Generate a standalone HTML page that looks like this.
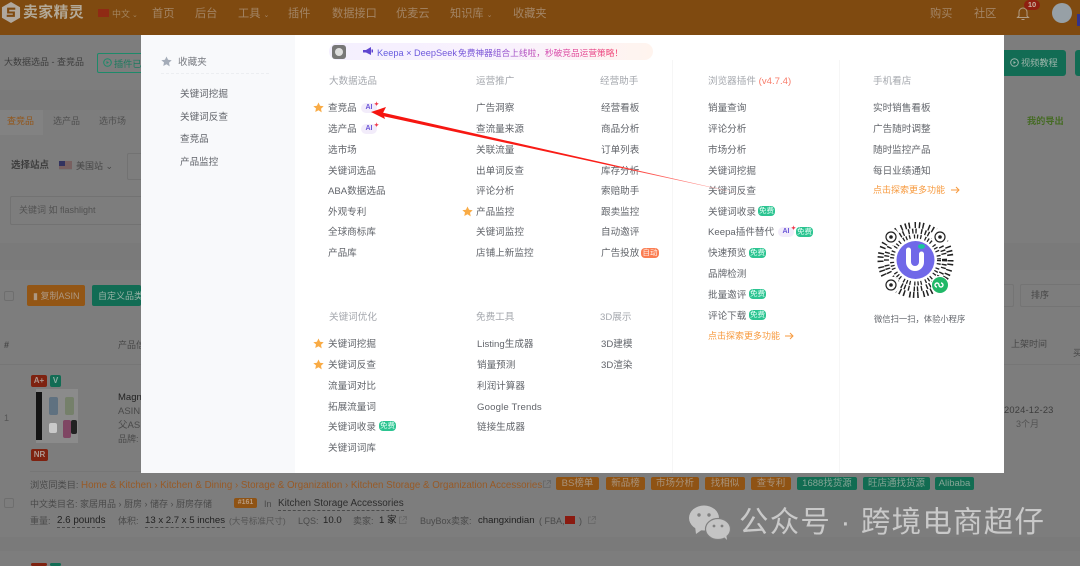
<!DOCTYPE html>
<html lang="zh"><head><meta charset="utf-8"><title>卖家精灵</title>
<style>
html,body{margin:0;padding:0}
body{width:1080px;height:566px;overflow:hidden;position:relative;background:#7d7d7d;font-family:"Liberation Sans","Noto Sans CJK SC",sans-serif;color:#5f6268}
#p{position:absolute;left:0;top:0;width:1080px;height:566px;overflow:hidden;filter:blur(.35px)}
#m{position:absolute;left:0;top:0;width:1080px;height:566px}
.t{position:absolute;white-space:nowrap;font-size:9.6px;line-height:14px;height:14px;color:#62656b;margin-top:1px}
#m .t{margin-top:4px}
#m .t.o{margin-top:2px}
.n{top:5px;height:16px;line-height:16px;font-size:11.2px;color:#a38566}
.h{color:#a5a8ae}
.d{color:#3d3d3d}
.g{color:#474747}
.b{position:absolute;border-radius:2px}
.tag{position:absolute;height:13px;line-height:13px;border-radius:2px;font-size:9.5px;text-align:center;color:#a8937c;background:#8f5314;top:477px}
.tg{background:#126c52;color:#86a596}
.free{position:absolute;width:17px;height:10px;line-height:10px;border-radius:4px;background:#2cc491;color:#e6fff6;font-size:7.5px;text-align:center}
.ai{position:absolute;width:16px;height:10px;line-height:10px;border-radius:5px;background:#f2ecfa;color:#6a55d8;font-size:7px;font-weight:bold;text-align:center}
.ai i{position:absolute;left:13px;top:-2px;color:#f03a4c;font-style:normal;font-size:6px;line-height:8px}
.s{position:absolute;width:11px;height:11px}
.o{color:#f79a3e;font-size:9px}
.u{border-bottom:1px dashed #4b4b4b;height:13px;color:#222;font-size:9.6px}
.q{color:#4a4a4a;font-size:9px}
</style></head><body><div id="p">

<!-- header -->
<div class="b" style="left:0;top:0;width:1080px;height:35px;background:#7f4a10;border-radius:0"></div>
<svg style="position:absolute;left:1px;top:1px" width="20" height="23" viewBox="0 0 21 23"><path d="M10.5 .5 20 6v11l-9.500 5.500L1 17V6z" fill="#b0a89e"/><path d="M15 7.500H7.500v4h6v3.500H6" fill="none" stroke="#7f4a10" stroke-width="2.200"/></svg>
<div class="t" style="left:23px;top:2px;height:20px;line-height:20px;font-size:14.800px;font-weight:bold;color:#b3a998;letter-spacing:.5px">卖家精灵</div>
<div class="b" style="left:98px;top:9px;width:11px;height:8px;background:#8f2a14;border-radius:0"></div>
<div class="t" style="left:112px;top:6px;color:#a3855f;font-size:9px">中文<span style="font-size:7px"> ⌄</span></div>
<div class="t n" style="left:152px">首页</div>
<div class="t n" style="left:195px">后台</div>
<div class="t n" style="left:238px">工具 <span style="font-size:7px">⌄</span></div>
<div class="t n" style="left:288px">插件</div>
<div class="t n" style="left:332px">数据接口</div>
<div class="t n" style="left:396px">优麦云</div>
<div class="t n" style="left:450px">知识库 <span style="font-size:7px">⌄</span></div>
<div class="t n" style="left:513px">收藏夹</div>
<div class="t n" style="left:930px">购买</div>
<div class="t n" style="left:974px">社区</div>
<svg style="position:absolute;left:1016px;top:5px" width="14" height="16" viewBox="0 0 14 16"><path d="M3 11V7a4 4 0 0 1 8 0v4l1.500 1.500h-11zM5.500 14.500h3" fill="none" stroke="#b09c84" stroke-width="1"/></svg>
<div class="b" style="left:1024px;top:0;width:16px;height:10px;border-radius:5px;background:#8f1f10;color:#c9b5a5;font-size:7.500px;line-height:10px;text-align:center;font-weight:bold">10</div>
<div class="b" style="left:1052px;top:3px;width:20px;height:20px;border-radius:50%;background:#97a0a6"></div>
<div class="b" style="left:1077px;top:14px;width:3px;height:12px;background:#33338a;border-radius:0"></div>

<!-- left background -->
<div class="t d" style="left:4px;top:54px;font-size:9px">大数据选品 - 查竞品</div>
<div class="b" style="left:97px;top:53px;width:50px;height:20px;border:1px solid #1d8a6a;box-sizing:border-box"></div>
<svg style="position:absolute;left:103px;top:58px" width="9" height="9" viewBox="0 0 9 9"><circle cx="4.500" cy="4.500" r="3.800" fill="none" stroke="#1d8a6a"/><path d="M3.500 3v3l2.500-1.500z" fill="#1d8a6a"/></svg>
<div class="t" style="left:114px;top:56px;color:#1d7a5f;font-size:9.200px">插件已</div>
<div class="b" style="left:0;top:90px;width:141px;height:20px;background:#7a7a7a;border-radius:0"></div>
<div class="b" style="left:0;top:110px;width:43px;height:25px;background:#828282;border-radius:0"></div>
<div class="t" style="left:7px;top:113px;color:#935518;font-size:9px">查竞品</div>
<div class="t" style="left:53px;top:113px;color:#4f4f4f;font-size:9px">选产品</div>
<div class="t" style="left:99px;top:113px;color:#4f4f4f;font-size:9px">选市场</div>
<div class="t d" style="left:11px;top:158px;font-size:9.500px;font-weight:bold">选择站点</div>
<svg style="position:absolute;left:59px;top:161px" width="13" height="9" viewBox="0 0 13 9"><rect width="13" height="9" fill="#767676"/><path d="M0 1h13M0 3h13M0 5h13M0 7h13" stroke="#7a4a4a" stroke-width="1"/><rect width="6" height="5" fill="#33335f"/></svg>
<div class="t g" style="left:76px;top:158px;font-size:9px">美国站 ⌄</div>
<div class="b" style="left:127px;top:153px;width:14px;height:25px;border:1px solid #727272"></div>
<div class="b" style="left:10px;top:196px;width:131px;height:27px;border:1px solid #727272"></div>
<div class="t" style="left:19px;top:202px;color:#525252;font-size:9px">关键词 如 flashlight</div>
<div class="b" style="left:0;top:243px;width:141px;height:27px;background:#7a7a7a;border-radius:0"></div>
<div class="b" style="left:1004px;top:243px;width:76px;height:27px;background:#7a7a7a;border-radius:0"></div>

<!-- right background -->
<div class="b" style="left:1004px;top:50px;width:62px;height:26px;background:#126c54;border-radius:0 3px 3px 0"></div>
<svg style="position:absolute;left:1010px;top:58px" width="9" height="9" viewBox="0 0 9 9"><circle cx="4.500" cy="4.500" r="3.800" fill="none" stroke="#9db5ab"/><path d="M3.500 3v3l2.500-1.500z" fill="#9db5ab"/></svg>
<div class="t" style="left:1021px;top:55px;color:#9db5ab;font-size:9.200px">视频教程</div>
<div class="b" style="left:1075px;top:50px;width:5px;height:26px;background:#126c54;border-radius:3px 0 0 3px"></div>
<div class="t" style="left:1027px;top:113px;color:#466b25;font-size:9.200px;font-weight:bold">我的导出</div>
<div class="b" style="left:1020px;top:284px;width:62px;height:21px;border:1px solid #747474"></div>
<div class="b" style="left:1000px;top:284px;width:12px;height:21px;border:1px solid #747474"></div>
<div class="t g" style="left:1031px;top:287px;font-size:9px">排序</div>
<div class="t g" style="left:1011px;top:336px;font-size:9px">上架时间</div>
<div class="t g" style="left:1073px;top:345px;font-size:9px">买</div>
<div class="t d" style="left:1004px;top:402px;font-size:9.300px;letter-spacing:.2px">2024-12-23</div>
<div class="t" style="left:1016px;top:416px;color:#535353;font-size:9px">3个月</div>

<!-- table left -->
<div class="b" style="left:4px;top:291px;width:8px;height:8px;border:1px solid #6e6e6e"></div>
<div class="b" style="left:27px;top:285px;width:58px;height:21px;background:#935615;border-radius:2px"></div>
<div class="t" style="left:33px;top:288px;color:#ad9882;font-size:9px">▮ 复制ASIN</div>
<div class="b" style="left:92px;top:285px;width:49px;height:21px;background:#126c54"></div>
<div class="t" style="left:98px;top:288px;color:#98b2a6;font-size:9px">自定义品类</div>
<div class="t g" style="left:4px;top:337px;font-weight:bold;font-size:9px">#</div>
<div class="t g" style="left:118px;top:337px;font-size:9px">产品信</div>
<div class="b" style="left:0;top:364px;width:141px;height:1px;background:#767676;border-radius:0"></div>
<div class="b" style="left:1004px;top:364px;width:76px;height:1px;background:#767676;border-radius:0"></div>
<div class="b" style="left:31px;top:375px;width:16px;height:12px;background:#7e2210;color:#ad9890;font-size:8px;line-height:12px;text-align:center;font-weight:bold">A+</div>
<div class="b" style="left:50px;top:375px;width:11px;height:12px;background:#126c54;color:#90b0a5;font-size:8px;line-height:12px;text-align:center;font-weight:bold">V</div>
<div class="b" style="left:36px;top:389px;width:42px;height:54px;background:#8b8b8b;border-radius:0"></div>
<div class="b" style="left:36px;top:392px;width:6px;height:48px;background:#141414;border-radius:0"></div>
<div class="b" style="left:49px;top:397px;width:9px;height:18px;background:#5f7180"></div>
<div class="b" style="left:65px;top:397px;width:9px;height:18px;background:#75806a"></div>
<div class="b" style="left:63px;top:420px;width:8px;height:18px;background:#7f4663"></div>
<div class="b" style="left:71px;top:420px;width:6px;height:14px;background:#222"></div>
<div class="b" style="left:49px;top:423px;width:8px;height:10px;background:#c9c9c9"></div>
<div class="b" style="left:31px;top:449px;width:17px;height:12px;background:#7e2210;color:#ad9890;font-size:8px;line-height:12px;text-align:center;font-weight:bold">NR</div>
<div class="t" style="left:4px;top:410px;color:#555;font-size:9px">1</div>
<div class="t" style="left:118px;top:390px;color:#222;font-size:9.500px">Magn</div>
<div class="t" style="left:118px;top:404px;color:#4a4a4a;font-size:9.500px">ASIN:</div>
<div class="t" style="left:118px;top:418px;color:#4a4a4a;font-size:9.500px">父ASI</div>
<div class="t" style="left:118px;top:431px;color:#4a4a4a;font-size:9px">品牌:</div>
<div class="b" style="left:30px;top:471px;width:111px;height:1px;background:#767676;border-radius:0"></div>

<!-- bottom rows -->
<div class="t" style="left:30px;top:477px;color:#4a4a4a;font-size:9.200px">浏览同类目: <span style="color:#985a26;font-size:9.750px">Home &amp; Kitchen › Kitchen &amp; Dining › Storage &amp; Organization › Kitchen Storage &amp; Organization Accessories</span></div>
<svg style="position:absolute;left:543px;top:480px" width="8" height="8" viewBox="0 0 8 8"><path d="M3 1H.5v6.500H7V5M4 .5h3.500V4M7.500 .5 3.500 4.500" fill="none" stroke="#666" stroke-width=".8"/></svg>
<div class="tag" style="left:556px;width:43px">BS榜单</div>
<div class="tag" style="left:606px;width:39px">新品榜</div>
<div class="tag" style="left:651px;width:48px">市场分析</div>
<div class="tag" style="left:705px;width:40px">找相似</div>
<div class="tag" style="left:751px;width:40px">查专利</div>
<div class="tag tg" style="left:797px;width:60px">1688找货源</div>
<div class="tag tg" style="left:863px;width:67px">旺店通找货源</div>
<div class="tag tg" style="left:935px;width:39px">Alibaba</div>
<div class="b" style="left:4px;top:498px;width:8px;height:8px;border:1px solid #6e6e6e"></div>
<div class="t q" style="left:30px;top:496px">中文类目名: 家居用品 › 厨房 › 储存 › 厨房存储</div>
<div class="b" style="left:234px;top:498px;width:23px;height:10px;background:#8f5314;color:#b89b7e;font-size:7px;line-height:10px;text-align:center;font-weight:bold">#161</div>
<div class="t q" style="left:264px;top:496px">In</div>
<div class="t u" style="left:278px;top:496px;color:#2d2d2d;font-size:9.900px">Kitchen Storage Accessories</div>
<div class="t q" style="left:30px;top:513px">重量:</div>
<div class="t u" style="left:57px;top:513px;font-size:9.800px">2.6 pounds</div>
<div class="t q" style="left:118px;top:513px">体积:</div>
<div class="t u" style="left:145px;top:513px">13 x 2.7 x 5 inches</div>
<div class="t" style="left:229px;top:513px;color:#555;font-size:8.500px">(大号标准尺寸)</div>
<div class="t q" style="left:298px;top:513px">LQS:</div>
<div class="t" style="left:323px;top:513px;color:#222;font-size:9.600px">10.0</div>
<div class="t q" style="left:353px;top:513px">卖家:</div>
<div class="t" style="left:379px;top:513px;color:#222;font-size:9.600px">1 家</div>
<svg style="position:absolute;left:399px;top:516px" width="8" height="8" viewBox="0 0 8 8"><path d="M3 1H.5v6.500H7V5M4 .5h3.500V4M7.500 .5 3.500 4.500" fill="none" stroke="#666" stroke-width=".8"/></svg>
<div class="t q" style="left:420px;top:513px">BuyBox卖家:</div>
<div class="t" style="left:478px;top:513px;color:#222;font-size:9.600px">changxindian</div>
<div class="t q" style="left:539px;top:513px">( FBA,</div>
<div class="b" style="left:565px;top:516px;width:10px;height:8px;background:#8a1a10;border-radius:0"></div>
<div class="t q" style="left:579px;top:513px">)</div>
<svg style="position:absolute;left:588px;top:516px" width="8" height="8" viewBox="0 0 8 8"><path d="M3 1H.5v6.500H7V5M4 .5h3.500V4M7.500 .5 3.500 4.500" fill="none" stroke="#666" stroke-width=".8"/></svg>
<div class="b" style="left:0;top:537px;width:1080px;height:14px;background:#7a7a7a;border-radius:0"></div>
<div class="b" style="left:31px;top:563px;width:16px;height:3px;background:#7e2210"></div>
<div class="b" style="left:50px;top:563px;width:11px;height:3px;background:#126c54"></div>

<!-- modal -->
<div class="b" style="left:141px;top:35px;width:863px;height:438px;background:#fff;border-radius:0"></div>
<div class="b" style="left:141px;top:35px;width:154px;height:438px;background:#f8f9fb;border-radius:0"></div>
<div class="b" style="left:672px;top:60px;width:1px;height:413px;background:#f6f6f6;border-radius:0"></div>
<div class="b" style="left:839px;top:60px;width:1px;height:413px;background:#f6f6f6;border-radius:0"></div>
<div class="b" style="left:161px;top:73px;width:108px;height:0;border-top:1px dashed #eceef1;border-radius:0"></div>

<div id="m">
<svg class="s" style="left:161px;top:56px" viewBox="0 0 24 24"><path d="M12 1l3.400 7.300 7.900 1-5.800 5.500 1.500 7.900L12 18l-7 3.700 1.500-7.900L.7 9.300l7.900-1z" fill="#a4acb8"/></svg>
<div class="t" style="left:178px;top:52px;color:#777a80">收藏夹</div>
<div class="t" style="left:180px;top:84px">关键词挖掘</div>
<div class="t" style="left:180px;top:107px">关键词反查</div>
<div class="t" style="left:180px;top:129px">查竞品</div>
<div class="t" style="left:180px;top:152px">产品监控</div>

<!-- banner -->
<div class="b" style="left:329px;top:43px;width:324px;height:17px;border-radius:9px;background:linear-gradient(90deg,#f4f0fe 0%,#f9f1fd 55%,#fff4ee 100%)"></div>
<div class="b" style="left:332px;top:45px;width:14px;height:14px;background:#777;border-radius:3px"></div>
<div class="b" style="left:335px;top:48px;width:8px;height:8px;background:#ddd;border-radius:50%"></div>
<svg style="position:absolute;left:363px;top:47px" width="10" height="9" viewBox="0 0 10 9"><path d="M0 3h3l5-3v8L3 5.500H0zM8.500 2.500h1.500v3H8.500z" fill="#5f46d0"/></svg>
<div class="t" style="left:377px;top:42px;font-size:8.700px;background:linear-gradient(90deg,#5f57e0 0%,#7a52d6 45%,#d64bb0 70%,#f5456f 100%);-webkit-background-clip:text;background-clip:text;color:transparent"><span style="display:inline-block;width:81px;font-size:9.200px">Keepa × DeepSeek</span>免费神器组合上线啦，秒破竞品运营策略！</div>

<!-- heads -->
<div class="t h" style="left:329px;top:71px">大数据选品</div>
<div class="t h" style="left:476px;top:71px">运营推广</div>
<div class="t h" style="left:600px;top:71px">经营助手</div>
<div class="t h" style="left:708px;top:71px">浏览器插件 <span style="color:#f87c6a">(v4.7.4)</span></div>
<div class="t h" style="left:873px;top:71px">手机看店</div>

<!-- col 1 -->
<svg class="s" style="left:313px;top:102px" viewBox="0 0 24 24"><path d="M12 1l3.400 7.300 7.900 1-5.800 5.500 1.500 7.900L12 18l-7 3.700 1.500-7.900L.7 9.300l7.900-1z" fill="#f9ab45"/></svg>
<div class="t" style="left:328px;top:98px">查竞品</div><div class="ai" style="left:361px;top:103px">AI<i>✦</i></div>
<div class="t" style="left:328px;top:119px">选产品</div><div class="ai" style="left:361px;top:124px">AI<i>✦</i></div>
<div class="t" style="left:328px;top:140px">选市场</div>
<div class="t" style="left:328px;top:161px">关键词选品</div>
<div class="t" style="left:328px;top:181px">ABA数据选品</div>
<div class="t" style="left:328px;top:202px">外观专利</div>
<div class="t" style="left:328px;top:222px">全球商标库</div>
<div class="t" style="left:328px;top:243px">产品库</div>

<!-- col 2 -->
<div class="t" style="left:476px;top:98px">广告洞察</div>
<div class="t" style="left:476px;top:119px">查流量来源</div>
<div class="t" style="left:476px;top:140px">关联流量</div>
<div class="t" style="left:476px;top:161px">出单词反查</div>
<div class="t" style="left:476px;top:181px">评论分析</div>
<svg class="s" style="left:462px;top:206px" viewBox="0 0 24 24"><path d="M12 1l3.400 7.300 7.900 1-5.800 5.500 1.500 7.900L12 18l-7 3.700 1.500-7.900L.7 9.300l7.900-1z" fill="#f9ab45"/></svg>
<div class="t" style="left:476px;top:202px">产品监控</div>
<div class="t" style="left:476px;top:222px">关键词监控</div>
<div class="t" style="left:476px;top:243px">店铺上新监控</div>

<!-- col 3 -->
<div class="t" style="left:601px;top:98px">经营看板</div>
<div class="t" style="left:601px;top:119px">商品分析</div>
<div class="t" style="left:601px;top:140px">订单列表</div>
<div class="t" style="left:601px;top:161px">库存分析</div>
<div class="t" style="left:601px;top:181px">索赔助手</div>
<div class="t" style="left:601px;top:202px">跟卖监控</div>
<div class="t" style="left:601px;top:222px">自动邀评</div>
<div class="t" style="left:601px;top:243px">广告投放</div>
<div class="free" style="left:641px;top:248px;background:#fb7d52;color:#fff0e8;width:18px">自动</div>

<!-- col 4 -->
<div class="t" style="left:708px;top:98px">销量查询</div>
<div class="t" style="left:708px;top:119px">评论分析</div>
<div class="t" style="left:708px;top:140px">市场分析</div>
<div class="t" style="left:708px;top:161px">关键词挖掘</div>
<div class="t" style="left:708px;top:181px">关键词反查</div>
<div class="t" style="left:708px;top:202px">关键词收录</div><div class="free" style="left:758px;top:206px">免费</div>
<div class="t" style="left:708px;top:222px">Keepa插件替代</div><div class="ai" style="left:778px;top:227px">AI<i>✦</i></div><div class="free" style="left:796px;top:227px">免费</div>
<div class="t" style="left:708px;top:243px">快速预览</div><div class="free" style="left:749px;top:248px">免费</div>
<div class="t" style="left:708px;top:264px">品牌检测</div>
<div class="t" style="left:708px;top:285px">批量邀评</div><div class="free" style="left:749px;top:289px">免费</div>
<div class="t" style="left:708px;top:306px">评论下载</div><div class="free" style="left:749px;top:310px">免费</div>
<div class="t o" style="left:708px;top:327px">点击探索更多功能</div>
<svg style="position:absolute;left:785px;top:332px" width="9" height="8" viewBox="0 0 9 8"><path d="M0 4h8M5 1l3 3-3 3" fill="none" stroke="#f79a3e"/></svg>

<!-- col 5 -->
<div class="t" style="left:873px;top:98px">实时销售看板</div>
<div class="t" style="left:873px;top:119px">广告随时调整</div>
<div class="t" style="left:873px;top:140px">随时监控产品</div>
<div class="t" style="left:873px;top:161px">每日业绩通知</div>
<div class="t o" style="left:873px;top:181px">点击探索更多功能</div>
<svg style="position:absolute;left:951px;top:186px" width="9" height="8" viewBox="0 0 9 8"><path d="M0 4h8M5 1l3 3-3 3" fill="none" stroke="#f79a3e"/></svg>

<!-- QR -->
<svg style="position:absolute;left:874px;top:219px" width="82" height="82" viewBox="0 0 82 82">
<g fill="none" stroke="#222">
<circle cx="41.500" cy="41" r="23.500" stroke-width="4" stroke-dasharray="1.300 2 1.300 3.500 1.300 1.800"/>
<circle cx="41.500" cy="41" r="29" stroke-width="5" stroke-dasharray="1.400 2.600 1.400 1.900 1.400 4.200"/>
<circle cx="41.500" cy="41" r="35" stroke-width="6" stroke-dasharray="1.500 2.200 1.500 4.500 1.500 2.800"/>
</g>
<circle cx="17" cy="18" r="8.500" fill="#fff"/><circle cx="66" cy="18" r="8.500" fill="#fff"/><circle cx="17" cy="66" r="8.500" fill="#fff"/>
<circle cx="17" cy="18" r="5" fill="none" stroke="#222" stroke-width="1.200"/><circle cx="17" cy="18" r="1.800" fill="#222"/>
<circle cx="66" cy="18" r="5" fill="none" stroke="#222" stroke-width="1.200"/><circle cx="66" cy="18" r="1.800" fill="#222"/>
<circle cx="17" cy="66" r="5" fill="none" stroke="#222" stroke-width="1.200"/><circle cx="17" cy="66" r="1.800" fill="#222"/>
<circle cx="41.500" cy="41" r="20.500" fill="#fff"/>
<circle cx="41.500" cy="41" r="19" fill="#7068e8"/>
<path d="M34.500 31v12a6.500 6.500 0 0 0 13 0v-8" fill="none" stroke="#fff" stroke-width="5" stroke-linecap="round"/>
<ellipse cx="47.500" cy="27.500" rx="3.500" ry="2.400" fill="#19c79c"/>
<circle cx="66" cy="66" r="9" fill="#fff"/>
<circle cx="66" cy="66" r="8" fill="#21b868"/>
<path d="M63 68a2 2 0 1 1 2-2v0a2 2 0 1 0 2-2" fill="none" stroke="#fff" stroke-width="1.400"/>
</svg>
<div class="t" style="left:874px;top:308px;font-size:8.300px">微信扫一扫，体验小程序</div>

<!-- group 2 -->
<div class="t h" style="left:329px;top:307px">关键词优化</div>
<div class="t h" style="left:476px;top:307px">免费工具</div>
<div class="t h" style="left:600px;top:307px">3D展示</div>
<svg class="s" style="left:313px;top:338px" viewBox="0 0 24 24"><path d="M12 1l3.400 7.300 7.900 1-5.800 5.500 1.500 7.900L12 18l-7 3.700 1.500-7.900L.7 9.300l7.900-1z" fill="#f9ab45"/></svg>
<svg class="s" style="left:313px;top:359px" viewBox="0 0 24 24"><path d="M12 1l3.400 7.300 7.900 1-5.800 5.500 1.500 7.900L12 18l-7 3.700 1.500-7.900L.7 9.300l7.900-1z" fill="#f9ab45"/></svg>
<div class="t" style="left:328px;top:334px">关键词挖掘</div>
<div class="t" style="left:328px;top:355px">关键词反查</div>
<div class="t" style="left:328px;top:376px">流量词对比</div>
<div class="t" style="left:328px;top:397px">拓展流量词</div>
<div class="t" style="left:328px;top:417px">关键词收录</div><div class="free" style="left:379px;top:421px">免费</div>
<div class="t" style="left:328px;top:438px">关键词词库</div>
<div class="t" style="left:477px;top:334px">Listing生成器</div>
<div class="t" style="left:477px;top:355px">销量预测</div>
<div class="t" style="left:477px;top:376px">利润计算器</div>
<div class="t" style="left:477px;top:397px;letter-spacing:.15px">Google Trends</div>
<div class="t" style="left:477px;top:417px">链接生成器</div>
<div class="t" style="left:601px;top:334px">3D建模</div>
<div class="t" style="left:601px;top:355px">3D渲染</div>
</div>

<!-- red arrow -->
<svg style="position:absolute;left:360px;top:100px" width="400" height="110" viewBox="360 100 400 110">
<defs><linearGradient id="r" gradientUnits="userSpaceOnUse" x1="376" y1="113" x2="755" y2="197"><stop offset="0" stop-color="#f5140f"/><stop offset=".6" stop-color="#fa1e18"/><stop offset=".85" stop-color="#ff8a86"/><stop offset="1" stop-color="#ffd5d3"/></linearGradient></defs>
<path d="M380 112L755 197 380 115.500z" fill="url(#r)"/>
<path d="M371 112l15-5-3 6 2 6z" fill="#f5140f"/>
</svg>

<!-- watermark -->
<svg style="position:absolute;left:689px;top:505px" width="44" height="36" viewBox="0 0 44 36">
<ellipse cx="15" cy="13" rx="15" ry="12.500" fill="#c4c4c4"/><path d="M6 21l1 8 7-5z" fill="#c4c4c4"/>
<ellipse cx="29" cy="24" rx="12.500" ry="10.500" fill="#c4c4c4" stroke="#808080" stroke-width="1.200"/><path d="M34 31l4 4-1-7z" fill="#c4c4c4"/>
<circle cx="10" cy="10" r="1.700" fill="#808080"/><circle cx="20" cy="10" r="1.700" fill="#808080"/><circle cx="25" cy="21" r="1.400" fill="#808080"/><circle cx="33" cy="21" r="1.400" fill="#808080"/>
</svg>
<div class="t" style="left:739px;top:503px;height:38px;line-height:38px;font-size:29.500px;color:#c9c9c9;letter-spacing:1.200px">公众号 · 跨境电商超仔</div>

</div></body></html>
